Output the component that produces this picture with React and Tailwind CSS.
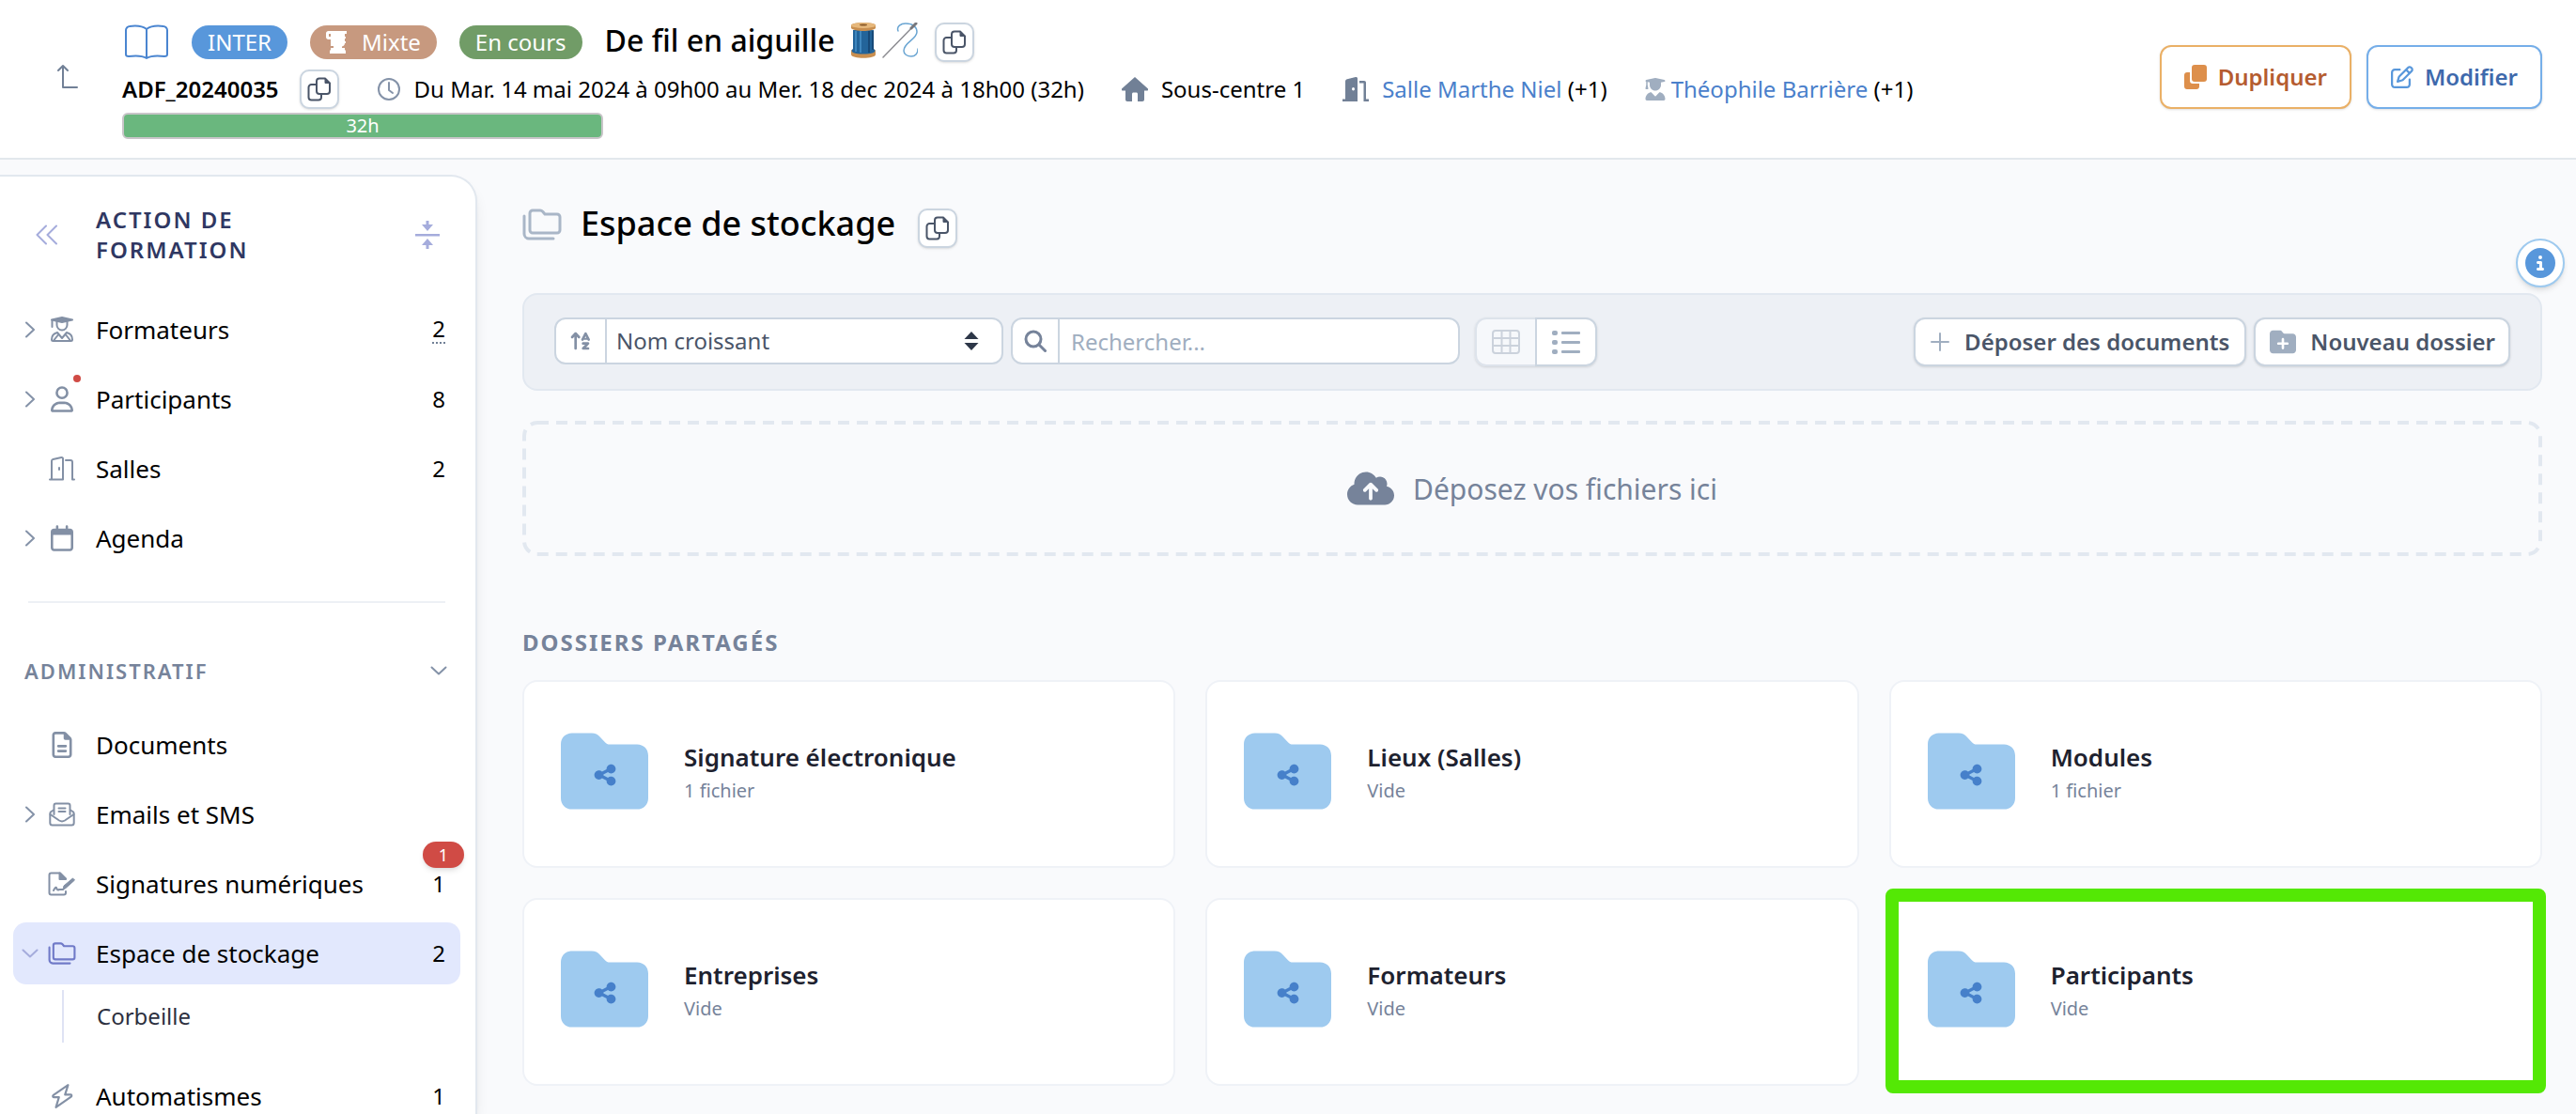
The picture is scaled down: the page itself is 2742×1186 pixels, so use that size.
import React, { useState } from 'react';
import { FaArrowUpAZ, FaCircleInfo, FaCloudArrowUp, FaFolderPlus, FaRegCalendar, FaRegFileLines, FaRegPenToSquare, FaRegUser, FaShareNodes, FaUserGraduate } from 'react-icons/fa6';
import clsx from 'clsx';

/* ---------- icons ---------- */

const Line = ({ viewBox, className, width = 2, children }) => (
  <svg
    viewBox={viewBox}
    className={className}
    fill="none"
    stroke="currentColor"
    strokeWidth={width}
    strokeLinecap="round"
    strokeLinejoin="round"
    aria-hidden="true"
  >
    {children}
  </svg>
);

const ArrowTurnUp = (props) => (
  <Line viewBox="0 0 24 28" {...props}>
    <path d="M22 25H7V2M2 7l5-5 5 5" />
  </Line>
);

const Book = (props) => (
  <Line viewBox="0 0 50 38" {...props}>
    <path d="M26 5c-4-3-11-4-18-3-2 0-4 2-4 4v26c0 1 1 2 3 2 7-1 14-1 19 2 5-3 12-3 19-2 2 0 3-1 3-2V6c0-2-2-4-4-4-7-1-14 0-18 3zM26 5v31" />
  </Line>
);

const CopyIcon = (props) => (
  <Line viewBox="0 0 26 26" {...props}>
    <path d="M13 1.500h6l5 5V15a3 3 0 0 1-3 3h-8a3 3 0 0 1-3-3V4.500a3 3 0 0 1 3-3z" />
    <path d="M19 1.500v5h5z" fill="currentColor" strokeWidth="1" />
    <path d="M9.500 8H4.500a3 3 0 0 0-3 3v10.500a3 3 0 0 0 3 3H12a3 3 0 0 0 3-3V19" />
  </Line>
);

const Clock = (props) => (
  <Line viewBox="0 0 26 26" {...props}>
    <circle cx="13" cy="13" r="11" />
    <path d="M13 6v8l4 3" />
  </Line>
);

const House = ({ className }) => (
  <svg viewBox="0 0 28 26" className={className} fill="currentColor" aria-hidden="true">
    <path d="M14 0 0 12.500c-.5 1 0 2 1.200 2H4V24c0 1 .8 2 2 2h5v-8c0-.8.700-1.500 1.500-1.500h3c.8 0 1.500.7 1.500 1.500v8h5c1.200 0 2-1 2-2v-9.500h2.800c1.200 0 1.700-1 1.200-2z" />
  </svg>
);

const DoorSolid = ({ className }) => (
  <svg viewBox="0 0 28 26" className={className} fill="currentColor" aria-hidden="true">
    <path fillRule="evenodd" d="M3 4.500C3 3.200 4 2.500 5 2.200L14 0c1-.2 2 .5 2 1.500V26H0v-2.500h3zM11.500 11a1.500 1.700 0 1 0 .01 3.400 1.500 1.700 0 0 0-.01-3.400z" />
    <path d="M18 4h5c1.300 0 2 .8 2 2v17.500h3V26h-5.500V6.500H18z" />
  </svg>
);

const DoorOpen = (props) => (
  <Line viewBox="0 0 28 27" {...props}>
    <path d="M1 25h14V3c0-1-.8-1.600-1.600-1.400L4.500 3.500C3.600 3.700 3 4.300 3 5.200V25M18 4.500h5c1 0 2 .8 2 2V25h2M11 12.500v2" />
  </Line>
);

const GradUser = (props) => (
  <Line viewBox="0 0 26 28" {...props}>
    <path d="M2 3.500 13 1l11 2.500L13 6z" fill="currentColor" />
    <path d="M2.500 4v7" />
    <path d="M7.500 5v4a5.500 5.500 0 0 0 11 0V5" />
    <path d="M8 17c-4 1-6 4-6 7.500 0 1 .6 1.500 1.500 1.500h19c.9 0 1.500-.5 1.500-1.500 0-3.500-2-6.500-6-7.500l-5 6zM4.500 25l4-5M21.500 25l-4-5" />
  </Line>
);

const Folders = (props) => (
  <Line viewBox="0 0 42 34" width={3} {...props}>
    <path d="M11 2h8c1 0 2 .5 2.700 1.200L24 6h13a3 3 0 0 1 3 3v14a3 3 0 0 1-3 3H11a3 3 0 0 1-3-3V5a3 3 0 0 1 3-3z" />
    <path d="M2 8v19a5 5 0 0 0 5 5h26" />
  </Line>
);

const EnvelopeText = (props) => (
  <Line viewBox="0 0 28 26" {...props}>
    <path d="M5.500 13V3.500c0-1 .8-2 2-2h13c1.200 0 2 1 2 2V13" />
    <path d="M10.500 6.500h7M10.500 10h7" />
    <path d="M5 8.500 2.500 10C1.700 10.600 1.300 11.300 1.300 12.200V22c0 1.500 1 2.500 2.500 2.500h20.400c1.500 0 2.500-1 2.500-2.500v-9.800c0-.9-.4-1.600-1.200-2.200L23 8.500" />
    <path d="m1.500 13 9.500 6.500c2 1.200 4 1.200 6 0l9.500-6.500" />
  </Line>
);

const Signature = (props) => (
  <Line viewBox="0 0 30 26" {...props}>
    <path d="M19 21v1.500c0 1-.8 2-2 2H3.500c-1.300 0-2-1-2-2v-19c0-1.200.7-2 2-2H13l6 6" />
    <path d="M12.500 1.500v6.500H19z" fill="currentColor" />
    <path d="M6 20c2-4 3-4 3.500-1.500.5 1 1.500 1 2.500.5h4" />
    <path d="m16 19 1-4 9.500-8 2 2L19 17.500z" fill="currentColor" strokeWidth="1" />
  </Line>
);

const Bolt = (props) => (
  <Line viewBox="0 0 22 26" {...props}>
    <path d="M17 2 2.500 12c-1 .8-.6 2 .6 2H8l-3 10L20 13.500c1-.8.5-2-.6-2H14z" />
  </Line>
);

const ChevronRight = (props) => (
  <Line viewBox="0 0 10 18" {...props}>
    <path d="m1 1.500 8 7.500-8 7.500" />
  </Line>
);

const ChevronDown = (props) => (
  <Line viewBox="0 0 18 10" {...props}>
    <path d="m1.500 1.500 7.500 7 7.500-7" />
  </Line>
);

const ChevronsLeft = (props) => (
  <Line viewBox="0 0 24 22" {...props}>
    <path d="m11 1.500-9.500 9.500 9.500 9.500M22 1.500 12.500 11l9.500 9.500" />
  </Line>
);

const CollapseIcon = ({ className }) => (
  <svg viewBox="0 0 26 30" className={className} fill="currentColor" aria-hidden="true">
    <path d="M0 14h26v2.500H0zM11.500 0h3v4H19l-6 7-6-7h4.500zM11.500 30h3v-4H19l-6-7-6 7h4.500z" />
  </svg>
);

const Scroll = ({ className }) => (
  <svg viewBox="0 0 22 24" className={className} fill="currentColor" aria-hidden="true">
    <path d="M0 2.500C0 1 1.200 0 2.500 0H22v3h-2v3h1v2h-1v3h1v2h-1c0 2-1 3-3 3.500V18h3v2.500h1V24H4v-3.500h1V18h3v-2H5V9H2.500C1.200 9 0 8 0 6.500zM3 3v3h2V3z" />
  </svg>
);

const Clone = ({ className }) => (
  <svg viewBox="0 0 24 26" className={className} fill="currentColor" aria-hidden="true">
    <rect x="8" y="0" width="16" height="18" rx="3" />
    <path d="M3 8h3v9c0 2 1.300 3 3 3h7v3c0 1.700-1.300 3-3 3H3c-1.700 0-3-1.300-3-3V11c0-1.700 1.300-3 3-3z" />
  </svg>
);

const Search = (props) => (
  <Line viewBox="0 0 24 24" width={3} {...props}>
    <circle cx="10" cy="10" r="8" />
    <path d="m16 16 6.500 6.500" />
  </Line>
);

const GridIcon = (props) => (
  <Line viewBox="0 0 30 26" {...props}>
    <rect x="1" y="1" width="28" height="24" rx="3" />
    <path d="M1 9h28M1 17h28M10.500 1v24M19.500 1v24" />
  </Line>
);

const ListIcon = ({ className }) => (
  <svg viewBox="0 0 30 26" className={className} fill="currentColor" aria-hidden="true">
    <rect x="0" y="1" width="6" height="5" rx="2" />
    <rect x="0" y="11" width="6" height="5" rx="2" />
    <rect x="0" y="21" width="6" height="5" rx="2" />
    <rect x="10" y="2" width="20" height="3" rx="1" />
    <rect x="10" y="12" width="20" height="3" rx="1" />
    <rect x="10" y="22" width="20" height="3" rx="1" />
  </svg>
);

const PlusIcon = (props) => (
  <Line viewBox="0 0 20 20" {...props}>
    <path d="M10 1v18M1 10h18" />
  </Line>
);

const Spool = ({ className }) => (
  <svg viewBox="0 0 28 38" className={className} aria-hidden="true">
    <path d="M1 30c0-2 26-2 26 0v4c0 5-26 5-26 0z" fill="#c98f50" />
    <ellipse cx="14" cy="30" rx="13" ry="3" fill="#e0ad70" />
    <path d="M3 8h22v20c2 1 2 3 0 4-6 2-16 2-22 0-2-1-2-3 0-4z" fill="#23649a" />
    <path d="M6 9v22M11 9v23" stroke="#3f86bd" strokeWidth="2" />
    <path d="M20 9v23M24 9v20" stroke="#174a78" strokeWidth="2" />
    <path d="M1 3c0-4 26-4 26 0v3c-3 4-23 4-26 0z" fill="#c98f50" />
    <ellipse cx="14" cy="3" rx="13" ry="3" fill="#e6b87c" />
    <ellipse cx="14" cy="2.500" rx="4" ry="1" fill="#8a5a28" />
  </svg>
);

const Needle = ({ className }) => (
  <svg viewBox="0 0 38 38" className={className} fill="none" strokeLinecap="round" aria-hidden="true">
    <path d="M17 9c-2-5 3-8 8-8 8 0 12 4 12 9 0 8-14 11-14 20 0 4 4 6 8 6 4 0 7-3 7-8" stroke="#6aa5d2" strokeWidth="1.500" />
    <path d="M1 37 36 1" stroke="#8d8d92" strokeWidth="1.500" />
    <path d="m31 6 5-5" stroke="#77777c" strokeWidth="3" />
  </svg>
);

const SharedFolder = () => (
  <span className="relative mb-1.5 flex h-[82px] w-[93px] shrink-0 items-center justify-center">
    <svg viewBox="0 0 94 82" className="absolute inset-0 size-full" fill="#9ecaef" aria-hidden="true">
      <path d="M12 0h21c4 0 7 1.500 9.500 4.500l5 5.500c1.500 1.500 3 2.300 5 2.300H82c7 0 12 5 12 12V70c0 7-5 12-12 12H12C5 82 0 77 0 70V12C0 5 5 0 12 0z" />
    </svg>
    <FaShareNodes className="relative mt-2 size-[26px] text-[#4680ca]" />
  </span>
);

/* ---------- shared pieces ---------- */

const CopyButton = ({ label }) => (
  <button
    type="button"
    aria-label={label}
    className="flex size-[42px] shrink-0 items-center justify-center rounded-[10px] border-2 border-[#cbd5e0] bg-white text-[#4a5568] shadow-sm"
  >
    <CopyIcon className="size-[26px]" />
  </button>
);

const Pill = ({ className, children }) => (
  <span className={clsx('flex h-9 items-center gap-4 rounded-full px-[17px] text-2xl text-white', className)}>
    {children}
  </span>
);

/* ---------- header ---------- */

const Header = () => (
  <header className="flex shrink-0 items-start border-b-2 border-[#e2e8ed] bg-white pt-6 pr-9 pb-5 pl-[60px]">
    <button type="button" aria-label="Retour" className="mt-11 mr-[46px] text-[#718096]">
      <ArrowTurnUp className="h-7 w-6" />
    </button>

    <div className="min-w-0 flex-1">
      <div className="flex h-[42px] items-center gap-6 whitespace-nowrap">
        <Book className="h-[38px] w-[50px] text-[#4a85d0]" />
        <Pill className="bg-[#5897db]">INTER</Pill>
        <Pill className="bg-[#c7997f]">
          <Scroll className="h-6 w-[22px]" />
          Mixte
        </Pill>
        <Pill className="bg-[#719c67]">En cours</Pill>
        <div className="flex items-center gap-[18px]">
          <h1 className="flex items-center pb-1 text-[32px] font-medium text-black">
            De fil en aiguille
            <Spool className="ml-4 h-[38px] w-7" />
            <Needle className="ml-1.5 size-[38px]" />
          </h1>
          <CopyButton label="Copier le titre" />
        </div>
      </div>

      <div className="mt-2 flex h-[42px] items-center gap-10 text-2xl whitespace-nowrap text-black">
        <div className="flex items-center gap-[22px]">
          <span className="font-semibold">ADF_20240035</span>
          <CopyButton label="Copier la référence" />
        </div>
        <div className="flex items-center gap-3.5">
          <Clock className="size-[26px] text-[#8492a8]" />
          <span>Du Mar. 14 mai 2024 à 09h00 au Mer. 18 dec 2024 à 18h00 (32h)</span>
        </div>
        <div className="flex items-center gap-3.5">
          <House className="h-[26px] w-7 text-[#718096]" />
          <span>Sous-centre 1</span>
        </div>
        <div className="flex items-center gap-3.5">
          <DoorSolid className="h-[26px] w-7 text-[#718096]" />
          <span><a href="#salle" className="text-[#4a80cb]">Salle Marthe Niel</a> (+1)</span>
        </div>
        <div className="flex items-center gap-1.5">
          <FaUserGraduate className="h-6 w-[22px] text-[#a0aec0]" />
          <span><a href="#formateur" className="text-[#4a80cb]">Théophile Barrière</a> (+1)</span>
        </div>
      </div>

      <div className="mt-1 flex h-7 w-[512px] items-center justify-center rounded-md border-2 border-[#c9c5c9] bg-[#6ab77e] text-xl text-white">
        32h
      </div>
    </div>

    <div className="flex gap-4 pt-6">
      <button type="button" className="flex h-[68px] items-center gap-3 rounded-xl border-2 border-[#eab066] bg-white px-6 text-2xl font-semibold text-[#b55c30] shadow-sm">
        <Clone className="h-[26px] w-6 text-[#dd8f4b]" />
        Dupliquer
      </button>
      <button type="button" className="flex h-[68px] items-center gap-3 rounded-xl border-2 border-[#75aee9] bg-white px-6 text-2xl font-semibold text-[#3e69ac] shadow-sm">
        <FaRegPenToSquare className="size-6 text-[#5897db]" />
        Modifier
      </button>
    </div>
  </header>
);

/* ---------- sidebar ---------- */

const mainItems = [
  { label: 'Formateurs', icon: GradUser, iconClass: 'h-7 w-[26px]', count: 2, expandable: true, underlined: true },
  { label: 'Participants', icon: FaRegUser, iconClass: 'h-7 w-6', count: 8, expandable: true, dot: true },
  { label: 'Salles', icon: DoorOpen, iconClass: 'h-7 w-7', count: 2 },
  { label: 'Agenda', icon: FaRegCalendar, iconClass: 'h-7 w-6', expandable: true },
];

const adminItems = [
  { label: 'Documents', icon: FaRegFileLines, iconClass: 'h-7 w-6' },
  { label: 'Emails et SMS', icon: EnvelopeText, iconClass: 'h-7 w-7', expandable: true },
  { label: 'Signatures numériques', icon: Signature, iconClass: 'h-7 w-[30px]', count: 1, badge: 1 },
  { label: 'Espace de stockage', icon: Folders, iconClass: 'h-6 w-[30px]', count: 2, children: ['Corbeille'] },
  { label: 'Automatismes', icon: Bolt, iconClass: 'h-7 w-6', count: 1 },
];

const NavItem = ({ item, active, onSelect }) => {
  const Icon = item.icon;

  return (
    <li>
      <a
        href="#"
        onClick={() => onSelect(item.label)}
        className={clsx(
          'relative flex h-[66px] items-center rounded-[14px] pr-4 text-[26px] text-black',
          active && 'bg-[#e2e8fd]'
        )}
      >
        <span className={clsx('flex w-9 justify-center', active ? 'text-[#a5acdc]' : 'text-[#8492a8]')}>
          {item.expandable && <ChevronRight className="h-[18px] w-2.5" />}
          {item.children && <ChevronDown className="h-2.5 w-[18px]" />}
        </span>
        <span className={clsx('relative flex w-8 justify-center', active ? 'text-[#707ac8]' : 'text-[#8390a5]')}>
          <Icon className={item.iconClass} />
          {item.dot && <span className="absolute -top-3 -right-1 size-2 rounded-full bg-[#d04b45]"></span>}
        </span>
        <span className="ml-5 flex-1">{item.label}</span>
        {item.count !== undefined && (
          <span className={clsx('text-2xl', item.underlined && 'border-b-2 border-dotted border-[#718096] leading-7')}>
            {item.count}
          </span>
        )}
        {item.badge && (
          <span className="absolute -top-3 -right-1 flex h-7 w-11 items-center justify-center rounded-full bg-[#d04b45] text-lg text-white shadow-md">
            {item.badge}
          </span>
        )}
      </a>
      {item.children && (
        <ul className="mt-1.5 mb-4 ml-[52px] border-l-2 border-[#dfe3f4]">
          {item.children.map((child) => (
            <li key={child}>
              <a href="#" className="flex h-14 items-center pl-[35px] text-2xl text-[#2d3040]">{child}</a>
            </li>
          ))}
        </ul>
      )}
    </li>
  );
};

const Sidebar = () => {
  const [active, setActive] = useState('Espace de stockage');

  return (
    <aside className="mt-4 w-[508px] shrink-0 overflow-hidden rounded-tr-[28px] border-t-2 border-r-2 border-[#e2e8ef] bg-white pr-4 pl-3.5 shadow-lg">
      <div className="flex items-center pt-[30px] pr-[22px] pl-6">
        <button type="button" aria-label="Réduire le menu" className="text-[#a5acdc]">
          <ChevronsLeft className="h-[22px] w-6" />
        </button>
        <h2 className="mx-10 flex-1 text-2xl leading-8 font-semibold tracking-[2px] text-[#2f3762]">
          ACTION DE
          <br />
          FORMATION
        </h2>
        <button type="button" aria-label="Tout replier" className="text-[#a5acdc]">
          <CollapseIcon className="h-[30px] w-[26px]" />
        </button>
      </div>

      <nav aria-label="Action de formation">
        <ul className="mt-9 flex flex-col gap-2">
          {mainItems.map((item) => (
            <NavItem key={item.label} item={item} active={active === item.label} onSelect={setActive} />
          ))}
        </ul>
      </nav>

      <hr className="mt-[34px] mr-4 ml-4 border-t-2 border-[#edf0f5]" />

      <button type="button" className="mt-[52px] flex w-full items-center justify-between pr-3.5 pl-3 text-[22px] leading-10 font-semibold tracking-[2px] text-[#76839a]">
        ADMINISTRATIF
        <ChevronDown className="h-2.5 w-[18px] text-[#8492a8]" />
      </button>

      <nav aria-label="Administratif">
        <ul className="mt-[26px] flex flex-col gap-2">
          {adminItems.map((item) => (
            <NavItem key={item.label} item={item} active={active === item.label} onSelect={setActive} />
          ))}
        </ul>
      </nav>
    </aside>
  );
};

/* ---------- storage area ---------- */

const folders = [
  { name: 'Signature électronique', content: '1 fichier' },
  { name: 'Lieux (Salles)', content: 'Vide' },
  { name: 'Modules', content: '1 fichier' },
  { name: 'Entreprises', content: 'Vide' },
  { name: 'Formateurs', content: 'Vide' },
  { name: 'Participants', content: 'Vide', highlighted: true },
];

const FolderCard = ({ folder }) => (
  <a
    href="#"
    className="relative flex h-[200px] items-center gap-[38px] rounded-2xl border-2 border-[#eff2f7] bg-white px-[39px]"
  >
    <SharedFolder />
    <span className="flex flex-col">
      <span className="text-[26px] leading-9 font-semibold text-[#1e222f]">{folder.name}</span>
      <span className="text-xl leading-9 text-[#76839a]">{folder.content}</span>
    </span>
    {folder.highlighted && (
      <span className="absolute -inset-x-1.5 -top-3 -bottom-2.5 rounded-lg border-[14px] border-[#54e805]"></span>
    )}
  </a>
);

const toolbarButton = 'flex h-[52px] items-center rounded-xl border-2 border-[#cbd5e0] bg-white text-2xl font-semibold text-[#4a5568] shadow-sm';

const Toolbar = () => {
  const [view, setView] = useState('grid');

  return (
    <div className="flex items-start rounded-2xl border-2 border-[#e2e8f0] bg-[#edf0f5] py-6 pr-8 pl-8">
      <div className="flex h-[50px] w-[478px] items-center overflow-hidden rounded-xl border-2 border-[#cbd5e0] bg-white text-2xl text-[#4a5568]">
        <label htmlFor="sort" aria-label="Trier par" className="flex h-full w-[54px] items-center justify-center border-r-2 border-[#cbd5e0]">
          <FaArrowUpAZ className="size-6 text-[#8390a5]" />
        </label>
        <select id="sort" defaultValue="name-asc" className="h-full flex-1 appearance-none bg-transparent pl-2.5 outline-none">
          <option value="name-asc">Nom croissant</option>
          <option value="name-desc">Nom décroissant</option>
        </select>
        <svg viewBox="0 0 16 20" className="mr-6 h-5 w-4 text-[#2d3748]" fill="currentColor" aria-hidden="true">
          <path d="m8 0 7.500 8H.5zM8 20l7.500-8H.5z" />
        </svg>
      </div>

      <div className="ml-2 flex h-[50px] w-[478px] items-center overflow-hidden rounded-xl border-2 border-[#cbd5e0] bg-white text-2xl">
        <label htmlFor="search" aria-label="Rechercher" className="flex h-full w-[50px] items-center justify-center border-r-2 border-[#cbd5e0]">
          <Search className="size-6 text-[#76839a]" />
        </label>
        <input
          id="search"
          type="text"
          placeholder="Rechercher..."
          className="h-full min-w-0 flex-1 pl-3 text-[#4a5568] outline-none placeholder:text-[#a0aec0]"
        />
      </div>

      <div className="ml-4 flex h-[52px] rounded-xl shadow-sm">
        <button
          type="button"
          aria-label="Vue grille"
          onClick={() => setView('grid')}
          className={clsx('flex w-16 items-center justify-center rounded-l-xl border-2 border-r-0', view === 'grid' ? 'border-[#dde3eb] bg-[#f6f8fb] text-[#cbd2dc]' : 'border-[#cbd5e0] bg-white text-[#a0aec0]')}
        >
          <GridIcon className="h-[26px] w-[30px]" />
        </button>
        <button
          type="button"
          aria-label="Vue liste"
          onClick={() => setView('list')}
          className={clsx('flex w-[66px] items-center justify-center rounded-r-xl border-2', view === 'list' ? 'border-[#dde3eb] bg-[#f6f8fb] text-[#cbd2dc]' : 'border-[#cbd5e0] bg-white text-[#a0aec0]')}
        >
          <ListIcon className="h-[26px] w-[30px]" />
        </button>
      </div>

      <div className="ml-auto flex gap-2">
        <button type="button" className={clsx(toolbarButton, 'gap-4 px-4')}>
          <PlusIcon className="size-5 text-[#a0aec0]" />
          Déposer des documents
        </button>
        <button type="button" className={clsx(toolbarButton, 'gap-3.5 px-3.5')}>
          <FaFolderPlus className="h-7 w-[30px] text-[#a0aec0]" />
          Nouveau dossier
        </button>
      </div>
    </div>
  );
};

const DropZone = () => (
  <div className="relative mt-8 flex h-36 items-center justify-center gap-5 text-[30px] text-[#76839a]">
    {/* dashed outline: 12px dashes, 8px gaps */}
    <svg className="absolute inset-0 size-full" fill="none" aria-hidden="true">
      <rect
        x="2"
        y="2"
        rx="14"
        className="h-[calc(100%-4px)] w-[calc(100%-4px)]"
        stroke="#e2e8f0"
        strokeWidth="4"
        strokeDasharray="12 8"
      />
    </svg>
    <FaCloudArrowUp className="h-11 w-[50px]" />
    Déposez vos fichiers ici
  </div>
);

const Storage = () => (
  <main className="relative min-w-0 flex-1 pt-[52px] pr-9 pl-12">
    <div className="flex items-start">
      <Folders className="h-[34px] w-[42px] text-[#a9b6c7]" />
      <h2 className="ml-5 text-4xl leading-8 font-medium text-black">Espace de stockage</h2>
      <span className="ml-6">
        <CopyButton label="Copier le nom de l'espace" />
      </span>
    </div>

    <button
      type="button"
      aria-label="Informations"
      className="absolute top-[84px] right-3 flex size-[52px] items-center justify-center rounded-full border-2 border-[#9ecaef] bg-white shadow-md"
    >
      <FaCircleInfo className="size-8 text-[#5897db]" />
    </button>

    <div className="mt-12">
      <Toolbar />
    </div>

    <DropZone />

    <h3 className="mt-[72px] text-2xl leading-10 font-bold tracking-[2px] text-[#76839a]">DOSSIERS PARTAGÉS</h3>

    <div className="mt-5 grid grid-cols-3 gap-8">
      {folders.map((folder) => (
        <FolderCard key={folder.name} folder={folder} />
      ))}
    </div>
  </main>
);

const App = () => (
  <div className="flex h-screen flex-col overflow-hidden bg-[#f9fafc] font-['Noto_Sans',sans-serif]">
    <Header />
    <div className="flex min-h-0 flex-1">
      <Sidebar />
      <Storage />
    </div>
  </div>
);

export default App;
